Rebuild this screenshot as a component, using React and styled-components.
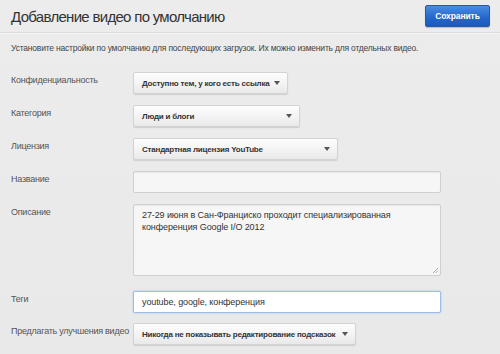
import React from "react";
import styled, { createGlobalStyle } from "styled-components";

const Global = createGlobalStyle`
  html, body { margin: 0; padding: 0; }
  body {
    background: #ebebeb;
    font-family: "Liberation Sans", Arial, sans-serif;
    width: 500px;
    height: 354px;
    overflow: hidden;
  }
`;

const Page = styled.div`
  width: 500px;
  height: 354px;
  background: linear-gradient(180deg, #ececec 0%, #e9e9e9 100%);
`;

const Header = styled.div`
  display: flex;
  align-items: center;
  justify-content: space-between;
  height: 32px;
  padding: 0 10px 0 11px;
  border-bottom: 1px solid #dadada;
  box-shadow: 0 1px 0 #f6f6f6;
`;

const Title = styled.h1`
  margin: 0;
  font-size: 15px;
  font-weight: normal;
  color: #333;
  letter-spacing: -0.7px;
`;

const SaveButton = styled.button`
  width: 65px;
  height: 22px;
  padding: 0;
  border: 1px solid #2a58a6;
  border-radius: 2px;
  background: linear-gradient(180deg, #4a8de0 0%, #2466cc 60%, #1c59bd 100%);
  box-shadow: 0 1px 1px rgba(0, 0, 0, 0.2);
  color: #fff;
  font-family: "Liberation Sans", Arial, sans-serif;
  font-weight: bold;
  font-size: 8.5px;
  letter-spacing: -0.1px;
`;

const Intro = styled.p`
  margin: 8px 0 0 11px;
  font-size: 8.5px;
  line-height: 14px;
  letter-spacing: -0.2px;
  white-space: nowrap;
  color: #444;
`;

const Form = styled.div`
  display: flex;
  flex-direction: column;
  padding: 17px 0 0 11px;
`;

const Row = styled.div`
  display: grid;
  grid-template-columns: 122px 1fr;
  margin-bottom: ${(p) => p.$gap ?? 11}px;
`;

const Label = styled.div`
  padding-top: 1px;
  font-size: 9px;
  line-height: 14px;
  letter-spacing: -0.25px;
  white-space: nowrap;
  color: #555;
`;

const Select = styled.div`
  box-sizing: border-box;
  display: flex;
  align-items: center;
  justify-content: space-between;
  width: ${(p) => p.$w}px;
  height: 22px;
  padding: 0 7px 0 8px;
  border: 1px solid #d3d3d3;
  border-radius: 2px;
  background: linear-gradient(180deg, #fdfdfd 0%, #f3f3f3 55%, #e9e9e9 100%);
  box-shadow: 0 1px 1px rgba(0, 0, 0, 0.12);
  font-size: 8px;
  font-weight: bold;
  letter-spacing: -0.2px;
  white-space: nowrap;
  color: #333;
`;

const Arrow = styled.span`
  flex: none;
  width: 0;
  height: 0;
  border-left: 3px solid transparent;
  border-right: 3px solid transparent;
  border-top: 4px solid #555;
`;

const Input = styled.div`
  box-sizing: border-box;
  width: 308px;
  height: 22px;
  padding: 0 8px;
  display: flex;
  align-items: center;
  border: 1px solid ${(p) => (p.$focus ? "#9dbfe6" : "#cfcfcf")};
  border-radius: 2px;
  background: ${(p) => (p.$focus ? "#ffffff" : "#f6f6f6")};
  box-shadow: ${(p) =>
    p.$focus ? "0 0 2px rgba(90,150,220,0.5)" : "inset 0 1px 1px rgba(0,0,0,0.06)"};
  font-size: 9px;
  letter-spacing: -0.1px;
  color: #333;
`;

const TextArea = styled.div`
  position: relative;
  box-sizing: border-box;
  width: 308px;
  height: 72px;
  padding: 4px 8px;
  border: 1px solid #cfcfcf;
  border-radius: 2px;
  background: #f6f6f6;
  box-shadow: inset 0 1px 1px rgba(0, 0, 0, 0.06);
  font-size: 9px;
  letter-spacing: -0.1px;
  line-height: 12px;
  color: #333;
`;

const Grip = styled.svg`
  position: absolute;
  right: 1px;
  bottom: 1px;
`;

export default function App() {
  return (
    <Page>
      <Global />
      <Header>
        <Title>Добавление видео по умолчанию</Title>
        <SaveButton>Сохранить</SaveButton>
      </Header>
      <Intro>
        Установите настройки по умолчанию для последующих загрузок. Их можно изменить для отдельных видео.
      </Intro>
      <Form>
        <Row>
          <Label>Конфиденциальность</Label>
          <Select $w={155}>
            Доступно тем, у кого есть ссылка <Arrow />
          </Select>
        </Row>
        <Row>
          <Label>Категория</Label>
          <Select $w={167}>
            Люди и блоги <Arrow />
          </Select>
        </Row>
        <Row>
          <Label>Лицензия</Label>
          <Select $w={205}>
            Стандартная лицензия YouTube <Arrow />
          </Select>
        </Row>
        <Row>
          <Label>Название</Label>
          <Input />
        </Row>
        <Row $gap={15}>
          <Label>Описание</Label>
          <TextArea>
            27-29 июня в Сан-Франциско проходит специализированная
            <br />
            конференция Google I/O 2012
            <Grip width="7" height="7" viewBox="0 0 7 7">
              <path d="M6 1 L1 6 M6 3.5 L3.5 6" stroke="#999" strokeWidth="0.8" fill="none" />
            </Grip>
          </TextArea>
        </Row>
        <Row $gap={10}>
          <Label>Теги</Label>
          <Input $focus>youtube, google, конференция</Input>
        </Row>
        <Row>
          <Label>Предлагать улучшения видео</Label>
          <Select $w={223}>
            Никогда не показывать редактирование подсказок <Arrow />
          </Select>
        </Row>
      </Form>
    </Page>
  );
}
